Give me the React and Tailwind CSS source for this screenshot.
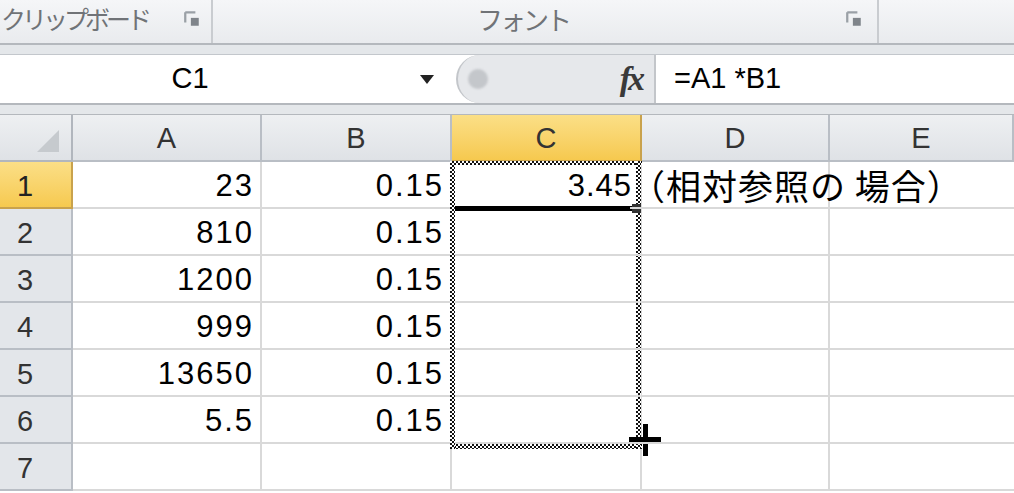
import { Fragment } from 'react'

const FONT = { fontFamily: '"Liberation Sans", "Noto Sans CJK JP", sans-serif' }
const JP = { fontFamily: '"Noto Sans CJK JP", sans-serif' }

const COLS = ['A', 'B', 'C', 'D', 'E']
const ROWS = [
  { n: 1, a: '23', b: '0.15' },
  { n: 2, a: '810', b: '0.15' },
  { n: 3, a: '1200', b: '0.15' },
  { n: 4, a: '999', b: '0.15' },
  { n: 5, a: '13650', b: '0.15' },
  { n: 6, a: '5.5', b: '0.15' },
  { n: 7, a: '', b: '' },
]

const ANTS = 'absolute bg-[repeating-conic-gradient(#111_0_25%,#fff_0_50%)] bg-[length:4px_4px]'

function Launcher() {
  return (
    <svg width="18" height="18" viewBox="0 0 16 16">
      <path d="M2 2h9M2 2v9" stroke="#9aa0a6" strokeWidth="2" fill="none" />
      <rect x="7" y="7" width="7" height="7" fill="#7f848a" />
    </svg>
  )
}

function Ribbon() {
  return (
    <div className="flex h-[45px] bg-gradient-to-b from-[#f5f6f8] to-[#e9ebee] border-b-2 border-[#b4b8bd]">
      <div className="w-[213px] flex items-center border-r-2 border-[#c9ccd0] pb-[6px]">
        <span className="text-[25px] leading-none text-[#707377] ml-[1px] tracking-[-4px] whitespace-nowrap" style={JP}>クリップボード</span>
        <div className="ml-auto mr-[10px]"><Launcher /></div>
      </div>
      <div className="w-[666px] flex items-center border-r-2 border-[#c9ccd0] pb-[6px]">
        <span className="text-[26px] leading-none text-[#707377] ml-[264px] tracking-[-3px]" style={JP}>フォント</span>
        <div className="ml-auto mr-[14px]"><Launcher /></div>
      </div>
      <div className="flex-1" />
    </div>
  )
}

function FormulaBar() {
  return (
    <>
      <div className="h-[10px] bg-[#e4e7ea] border-b border-[#c3c7cc]" />
      <div className="flex h-[50px] bg-white border-b-2 border-[#b4b8bd]">
        <div className="w-[380px] flex items-center justify-center text-[29px] text-black" style={FONT}>C1</div>
        <div className="w-[76px] flex items-center justify-end pr-[22px]">
          <svg width="14" height="9" viewBox="0 0 14 9"><path d="M0 0h14L7 9z" fill="#222" /></svg>
        </div>
        <div className="w-[198px] flex items-center bg-[#e6e8eb] rounded-l-[24px] border-l-2 border-[#c3c6ca]">
          <div className="w-[20px] h-[20px] rounded-full bg-[#c4c7cb] ml-[10px] blur-[1px]" />
          <span className="ml-auto mr-[12px] text-[34px] leading-none font-bold italic text-[#3a3a3a] tracking-[-3px]" style={{ fontFamily: '"Liberation Serif", serif' }}>fx</span>
        </div>
        <div className="flex-1 flex items-center border-l-2 border-[#c3c6ca] pl-[18px] text-[29px] text-black" style={FONT}>
          =A1 *B1
        </div>
      </div>
      <div className="h-[10px] bg-[#e4e7ea] border-b border-[#b4b8bd]" />
    </>
  )
}

function Sheet() {
  return (
    <div className="relative">
      <div className="grid grid-cols-[73px_189px_190px_190px_188px_184px] grid-rows-[47px_repeat(7,47px)]">
        <div className="bg-gradient-to-b from-[#eef0f2] to-[#dfe2e6] border-r-2 border-b-2 border-[#b1b6bd] flex items-end justify-end pr-[12px] pb-[8px]">
          <svg width="22" height="22" viewBox="0 0 22 22"><path d="M22 0V22H0z" fill="#c6cace" /></svg>
        </div>
        {COLS.map(c => (
          <div
            key={c}
            className={
              c === 'C'
                ? 'bg-gradient-to-b from-[#fbdf86] to-[#f6c94e] border-r-2 border-b-2 border-[#c9a24c] flex items-center justify-center pt-[3px] text-[29px] text-[#333]'
                : 'bg-gradient-to-b from-[#eef0f2] to-[#dfe2e6] border-r-2 border-b-2 border-[#b9bec5] flex items-center justify-center pt-[3px] text-[29px] text-[#333]'
            }
            style={FONT}
          >
            {c}
          </div>
        ))}
        {ROWS.map(r => (
          <Fragment key={r.n}>
            <div
              className={
                r.n === 1
                  ? 'bg-gradient-to-b from-[#fbdf86] to-[#f6c94e] border-r-2 border-b-2 border-[#c9a24c] flex items-center pl-[17px] pt-[4px] text-[29px] text-[#222]'
                  : 'bg-[#e3e6ea] border-r-2 border-b-2 border-[#b9bec5] flex items-center pl-[17px] pt-[4px] text-[29px] text-[#333]'
              }
              style={FONT}
            >
              {r.n}
            </div>
            <div className="border-r-2 border-b-2 border-[#d9d9d9] flex items-center justify-end pr-[6px] pt-[4px] text-[31px] tracking-[2px] text-black" style={FONT}>{r.a}</div>
            <div className="border-r-2 border-b-2 border-[#d9d9d9] flex items-center justify-end pr-[6px] pt-[4px] text-[31px] tracking-[2px] text-black" style={FONT}>{r.b}</div>
            <div className="border-r-2 border-b-2 border-[#d9d9d9] flex items-center justify-end pr-[8px] pt-[4px] text-[31px] tracking-[1px] text-black" style={FONT}>
              {r.n === 1 ? '3.45' : ''}
            </div>
            <div className="border-r-2 border-b-2 border-[#d9d9d9] flex items-center overflow-visible whitespace-nowrap -ml-[12px] pt-[2px] text-[35px] tracking-[1px] text-black relative z-10" style={JP}>
              {r.n === 1 ? '（相対参照の 場合）' : ''}
            </div>
            <div className="border-b-2 border-[#d9d9d9]" />
          </Fragment>
        ))}
      </div>

      {/* copy marquee around C1:C6 */}
      <div className={`${ANTS} left-[450px] top-[46px] w-[192px] h-[4px]`} />
      <div className={`${ANTS} left-[450px] top-[329px] w-[192px] h-[5px]`} />
      <div className={`${ANTS} left-[450px] top-[46px] w-[5px] h-[288px]`} />
      <div className={`${ANTS} left-[636px] top-[46px] w-[5px] h-[288px]`} />
      {/* active cell bottom edge + fill handle */}
      <div className="absolute left-[455px] top-[91px] w-[177px] h-[5px] bg-black" />
      <div className="absolute left-[632px] top-[89px] w-[9px] h-[9px] bg-[#333]" />
      {/* crosshair cursor */}
      <div className="absolute left-[643px] top-[309px] w-[5px] h-[32px] bg-black" />
      <div className="absolute left-[629px] top-[322px] w-[32px] h-[5px] bg-black" />
    </div>
  )
}

export default function App() {
  return (
    <div className="w-[1014px] h-[493px] overflow-hidden bg-white" style={FONT}>
      <Ribbon />
      <FormulaBar />
      <Sheet />
    </div>
  )
}
